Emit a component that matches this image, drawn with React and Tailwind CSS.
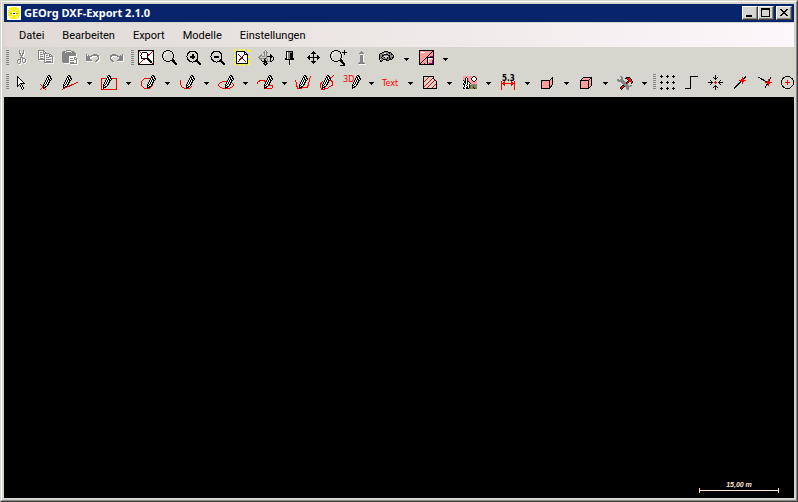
import { useState } from "react";

const PALETTE = {
  "#": "#000000",
  g: "#848484",
  w: "#ffffff",
  r: "#ff0000",
  y: "#ffff00",
  p: "#ff9c9c",
  o: "#848400",
  c: "#d6d6ce",
};

// Draws a small bitmap, one character per pixel ("." is transparent)
function Bitmap({ x = 0, y = 0, rows, tint }) {
  return rows.flatMap((row, j) =>
    [...row].map((ch, i) =>
      ch === "." ? null : (
        <rect key={`${i}-${j}`} x={x + i} y={y + j} width="1" height="1" fill={tint || PALETTE[ch]} />
      )
    )
  );
}

// Disabled icons are grey with a white shadow one pixel down and right
function Disabled({ x, y, rows }) {
  return (
    <>
      <Bitmap x={x + 1} y={y + 1} rows={rows} tint="#ffffff" />
      <Bitmap x={x} y={y} rows={rows} />
    </>
  );
}

const PENCIL = [
  "......##..",
  ".....#w##.",
  ".....##w#.",
  "....#w#w##",
  "....#w##w#",
  "...#w#w##.",
  "...#w#w#..",
  "..#w#w##..",
  "..#w#w#...",
  ".#w#w##...",
  ".##ww#....",
  ".#w##.....",
  ".###......",
  ".#........",
];

function Pencil({ x, y = 4 }) {
  return <Bitmap x={x} y={y} rows={PENCIL} />;
}

function Red({ d }) {
  return <path d={d} stroke="#ff0000" fill="none" />;
}

function Black({ d, w = 1, fill = "none" }) {
  return <path d={d} stroke="#000" strokeWidth={w} fill={fill} />;
}

const LENS = [
  "....####.......",
  "..##....##.....",
  ".#..ww....#....",
  ".#.w......#....",
  "#.w........#...",
  "#.w........#...",
  "#..........#...",
  "#..........#...",
  ".#........#....",
  ".#........##...",
  "..##....#####..",
  "....####..###..",
  "...........###.",
  "............###",
  ".............##",
];

const icons = {
  cut: (
    <Disabled
      x={8}
      y={3}
      rows={[
        "..g...g..",
        "..g...g..",
        "..g...g..",
        "..gg.gg..",
        "...g.g...",
        "...ggg...",
        "....g....",
        "...ggg...",
        "...g.ggg.",
        ".ggg.g..g",
        "g..g.g..g",
        "g..g.g..g",
        "g..g..gg.",
        ".gg......",
      ]}
    />
  ),
  copy: (
    <Disabled
      x={5}
      y={3}
      rows={[
        "gggggg.........",
        "g....gg........",
        "g.gg.g.g.......",
        "g....gggggg....",
        "g.ggg.g....gg..",
        "g.....g.gg.g.g.",
        "g.ggg.g....gggg",
        "g.....g.ggg...g",
        "g.ggg.g.......g",
        "ggggggg.ggggg.g",
        "......g.......g",
        "......g.ggggg.g",
        "......ggggggggg",
      ]}
    />
  ),
  paste: (
    <Disabled
      x={5}
      y={3}
      rows={[
        "....ggggg......",
        ".ggg.....ggg...",
        "ggg.ggggg.ggg..",
        "gggggggggggggg.",
        "gggggggggggggg.",
        "gggggggggggggg.",
        "ggggggg........",
        "ggggggg.wwwwgg.",
        "ggggggg.gggwgwg",
        "ggggggg.wwwwggg",
        "ggggggg.ggggwwg",
        "ggggggg.wwwwwwg",
        ".gggggg.ggggwwg",
        "........ggggggg",
      ]}
    />
  ),
  undo: (
    <Disabled
      x={5}
      y={7}
      rows={[
        "g......gggg..",
        "g.g..gggggggg",
        "gggggg.....gg",
        "gggg........g",
        "gggg........g",
        "ggggg......gg",
        "gggggg....gg.",
        ".........gg..",
      ]}
    />
  ),
  redo: (
    <Disabled
      x={5}
      y={7}
      rows={[
        "..gggg......g",
        "gggggggg..g.g",
        "gg.....gggggg",
        "g........gggg",
        "g........gggg",
        "gg......ggggg",
        ".gg....gggggg",
        "..gg.........",
      ]}
    />
  ),
  zoomAll: (
    <>
      <rect x="4.5" y="3.5" width="15" height="14" fill="#fff" stroke="#000" />
      <path d="M5 4L19 17M19 4L5 17" stroke="#c60000" />
      <circle cx="10.5" cy="8.5" r="3.5" fill="#fff" stroke="#000" />
      <Black d="M13 11L18 16" w={2} />
    </>
  ),
  zoom: <Bitmap x={4} y={3} rows={LENS} />,
  zoomIn: (
    <>
      <circle cx="10.5" cy="9.5" r="5.5" fill="none" stroke="#000" />
      <Black d="M8 9.5H13M10.5 7V12" w={2} />
      <Black d="M14 13L19 18" w={2} />
    </>
  ),
  zoomOut: (
    <>
      <circle cx="10.5" cy="9.5" r="5.5" fill="none" stroke="#000" />
      <Black d="M8 9.5H13" w={2} />
      <Black d="M14 13L19 18" w={2} />
    </>
  ),
  redraw: (
    <>
      <path
        d="M4 3L6 5M20 3L18 5M4 18L6 16M20 18L18 16M9.5 2V4M13.5 2V4M9.5 17V19M13.5 17V19M4 8.5H6M4 12.5H6M18 9.5H20M18 13.5H20"
        stroke="#ffff00"
        strokeWidth="2"
      />
      <path d="M6.5 4.5H14.5L17.5 7.5V16.5H6.5Z" fill="#fff" stroke="#000" />
      <Black d="M14.5 4.5V7.5H17.5" />
      <path d="M8 7L16 15M15 7L8 15" stroke="#840000" />
    </>
  ),
  rotate: (
    <Bitmap
      x={4}
      y={3}
      rows={[
        ".......g........",
        "......gcg.......",
        ".....ggcgg......",
        "......gcg.......",
        "...g..gcg...#...",
        "..gg..gcg...##..",
        ".ggcgggcg######.",
        "ggccccccg...##.#",
        ".gggggg#g...#..#",
        "..gg..#gcg..#..#",
        "...#..##cg..#.#.",
        "....#####ggg##..",
        "......###.......",
        ".....##.##......",
        "......###.......",
        ".......#........",
      ]}
    />
  ),
  pin: (
    <Bitmap
      x={7}
      y={4}
      rows={[
        ".#######.",
        ".#wgggg#.",
        ".#wgg###.",
        ".#wgg###.",
        ".#wgg###.",
        ".#wgg###.",
        ".#wgg###.",
        "##wgg####",
        "#########",
        "....#w...",
        "....#w...",
        "....#w...",
        "....#....",
        "....#....",
      ]}
    />
  ),
  pan: (
    <Bitmap
      x={5}
      y={4}
      rows={[
        "......#......",
        ".....###.....",
        "....#####....",
        "......#......",
        "..#...#...#..",
        ".##...#...##.",
        "#############",
        ".##...#...##.",
        "..#...#...#..",
        "......#......",
        "....#####....",
        ".....###.....",
        "......#......",
      ]}
    />
  ),
  zoomDynamic: (
    <>
      <Bitmap x={4} y={3} rows={LENS} />
      <Black d="M16 5.5H21M18.5 3V8M14 18.5H19" />
    </>
  ),
  info: (
    <Disabled
      x={8}
      y={4}
      rows={["...g...", "..ggg..", ".ggggg.", ".......", "..ggg..", "..ggg..", "..ggg..", "..ggg..", "..ggg..", "..ggg..", "..ggg..", ".ggggg.", "ggggggg"]}
    />
  ),
  view3d: (
    <Bitmap
      x={5}
      y={4}
      rows={[
        ".....####......",
        "...##gggg###...",
        ".##ggwwggg#g#..",
        "#gggg####ggg##.",
        "#gg##gggg##ggg#",
        "#gg#gw..wg#ggg#",
        "#g#gg#..#g#gg##",
        "#gg#gggg#g##g#.",
        "#wgg####gg###..",
        ".#g#...###.....",
        ".##............",
      ]}
    />
  ),
  model: (
    <>
      <rect x="6.5" y="3.5" width="14" height="14" fill="#ff9c9c" stroke="#000" />
      <path d="M8 5.5H12M15 11.5H19M15.5 11V15" stroke="#fff" />
      <path d="M16 16.5H20M19.5 13V17M11.5 16V17M17 9.5H20" stroke="#840084" />
      <Black d="M7 17L20 4M14.5 17V10.5H20" />
    </>
  ),
  pointer: (
    <Bitmap
      x={8}
      y={5}
      rows={[
        "#.......",
        "##......",
        "#w#.....",
        "#ww#....",
        "#www#...",
        "#wwww#..",
        "#wwwww#.",
        "#ww#####",
        "#w#w#...",
        "##.#w#..",
        "#..#w#..",
        "....#w#.",
        "....#w#.",
        ".....#..",
      ]}
    />
  ),
  point: (
    <>
      <Red d="M7 13L13 19M13 13L7 19" />
      <Pencil x={9} />
    </>
  ),
  line: (
    <>
      <Pencil x={5} />
      <Red d="M5 18.5L21 11" />
    </>
  ),
  rect: (
    <>
      <Red d="M5.5 7.5H20.5V18.5H5.5Z" />
      <Pencil x={6} />
    </>
  ),
  circle: (
    <>
      <circle cx="12" cy="12.5" r="5.5" fill="none" stroke="#f00" />
      <Pencil x={11} />
    </>
  ),
  arc: (
    <>
      <Red d="M6.5 9V13L8.5 16.5L12 17.5H15L18 15.5" />
      <Pencil x={11} />
    </>
  ),
  ellipse: (
    <>
      <ellipse cx="13" cy="14" rx="7.5" ry="3.5" fill="none" stroke="#f00" />
      <Pencil x={11} />
    </>
  ),
  spline: (
    <>
      <Red d="M5.5 13V11.5L8 9.5H12L17 14.5L20.5 15V17L15 17.5L12 16.5" />
      <Pencil x={11} />
    </>
  ),
  polyline: (
    <>
      <Red d="M4.5 9L6.5 17.5L16.5 16.5L19.5 5" />
      <Pencil x={7} />
    </>
  ),
  freehand: (
    <>
      <Red d="M8 10L5.5 13V16.5L7 18.5L12 17.5L17.5 14V11L15.5 9V7L19 4.5" />
      <Pencil x={6} />
    </>
  ),
  draw3d: (
    <>
      <text x="4" y="11" fontSize="9" fill="#f00" fontFamily="DejaVu Sans Condensed, sans-serif">3D</text>
      <Pencil x={12} />
    </>
  ),
  text: (
    <text x="4" y="15" fontSize="9" fill="#f00" fontFamily="DejaVu Sans Condensed, sans-serif">Text</text>
  ),
  hatch: (
    <>
      <path d="M6.5 5.5H16.5V7.5L19.5 10.5V17.5H6.5Z" stroke="#000" />
      <Red d="M7 11L12 6M7 16L16 7M10 17L18 9M15 17L19 13" />
    </>
  ),
  image: (
    <Bitmap
      x={7}
      y={5}
      rows={[
        "pppppppppp##pp",
        "ppp#ppppp#ww#p",
        "pp#w#ppp#wwww#",
        "pp#w#ppp#wwww#",
        "#p#w#pppp#ww#p",
        "w##w##pppp##pp",
        "w##w#w#ppppppp",
        "#w#w#ww#pppppp",
        "##ww#w#wgggggg",
        "w#w#ww#oggoggg",
        "w#ww#w#ogogogg",
        "#ww##w#ogg#ogg",
        "##w###oogoo#oo",
      ]}
    />
  ),
  dimension: (
    <>
      <text x="7" y="10" fontSize="8" fontWeight="bold" fill="#000" fontFamily="DejaVu Sans Condensed, sans-serif">5.3</text>
      <Red d="M6.5 10V19M19.5 10V19M7 12.5H19" />
      <Red d="M8.5 11V14M9.5 10V15M17.5 11V14M16.5 10V15" />
    </>
  ),
  face: (
    <>
      <rect x="7.5" y="9.5" width="8" height="8" fill="#ff9c9c" stroke="#000" />
      <path d="M15.5 9.5L18.5 6.5V13.5L15.5 17.5Z" fill="#ff9c9c" stroke="#000" />
    </>
  ),
  cube: (
    <>
      <path d="M7.5 9.5L10.5 6.5H18.5V14.5L15.5 17.5H7.5Z" fill="#ff9c9c" stroke="#000" />
      <Black d="M7.5 9.5H15.5V17.5M15.5 9.5L18.5 6.5" />
    </>
  ),
  tools: (
    <Bitmap
      x={5}
      y={5}
      rows={[
        "...gg...........",
        "....gg...####...",
        "....gg..##rrr#..",
        "gg.ggg....#rrr#.",
        "ggggggg....#rr#.",
        ".ggggggg..#rrrr#",
        "....ggggg#r#..r#",
        ".....gggg#r...#.",
        "......ggggg.....",
        ".....##ggggg.gg.",
        "....#rr#gggggg..",
        "...#rr#..ggg....",
        "...#r#...ggg....",
        "....#.....gg....",
      ]}
    />
  ),
  grid: (
    <Black d="M4 5.5H7M5.5 4V7M10 5.5H13M11.5 4V7M16 5.5H19M17.5 4V7M4 11.5H7M5.5 10V13M10 11.5H13M11.5 10V13M16 11.5H19M17.5 10V13M4 17.5H7M5.5 16V19M10 17.5H13M11.5 16V19M16 17.5H19M17.5 16V19" />
  ),
  ortho: <Black d="M5 17.5H10.5V5.5H18" />,
  center: (
    <Bitmap
      x={4}
      y={4}
      rows={[
        ".......#.......",
        ".......#.......",
        ".....#.#.#.....",
        "......###......",
        ".......#.......",
        "..#.........#..",
        "...#...r...#...",
        "#####.rrr.#####",
        "...#...r...#...",
        "..#.........#..",
        ".......#.......",
        "......###......",
        ".....#.#.#.....",
        ".......#.......",
        ".......#.......",
      ]}
    />
  ),
  snap: (
    <>
      <Black d="M6 17.5L18 5.5" />
      <Red d="M11 9.5H18M14.5 6V13" />
      <rect x="13" y="8" width="3" height="3" fill="#f00" />
    </>
  ),
  intersect: (
    <>
      <Black d="M6 6L15 11L19 12M13 17L16 12L19 6" />
      <Red d="M13 11.5H20M16.5 8V15" />
      <rect x="15" y="10" width="3" height="3" fill="#f00" />
    </>
  ),
  snapCircle: (
    <>
      <circle cx="11.5" cy="11.5" r="6" fill="none" stroke="#000" />
      <Red d="M9 11.5H14M11.5 9V14" />
    </>
  ),
};

function ToolButton({ icon, label, active, onClick }) {
  return (
    <button
      type="button"
      title={label}
      aria-label={label}
      aria-pressed={active}
      onClick={onClick}
      className="h-6 w-6 shrink-0"
    >
      <svg width="24" height="24" viewBox="0 0 24 24" fill="none" shapeRendering="crispEdges">
        {icons[icon]}
      </svg>
    </button>
  );
}

function MenuArrow({ label }) {
  return (
    <button type="button" aria-label={label} className="flex h-6 w-[15px] shrink-0 items-center justify-end pr-1">
      <svg width="5" height="3" viewBox="0 0 5 3" shapeRendering="crispEdges">
        <Bitmap rows={["#####", ".###.", "..#.."]} />
      </svg>
    </button>
  );
}

function Grip() {
  return (
    <span className="flex h-6 w-[5px] shrink-0 justify-end pt-[3px]">
      <svg width="3" height="16" viewBox="0 0 3 16" shapeRendering="crispEdges">
        <path d="M1.5 0V16" stroke="#848484" strokeWidth="3" strokeDasharray="1 1" />
      </svg>
    </span>
  );
}

const menus = ["Datei", "Bearbeiten", "Export", "Modelle", "Einstellungen"];

// [icon, label, has drop-down]
const editTools = [
  ["cut", "Ausschneiden"],
  ["copy", "Kopieren"],
  ["paste", "Einfügen"],
  ["undo", "Rückgängig"],
  ["redo", "Wiederholen"],
];

const viewTools = [
  ["zoomAll", "Alles zeigen"],
  ["zoom", "Zoom"],
  ["zoomIn", "Vergrößern"],
  ["zoomOut", "Verkleinern"],
  ["redraw", "Neu zeichnen"],
  ["rotate", "Drehen"],
  ["pin", "Fixieren"],
  ["pan", "Verschieben"],
  ["zoomDynamic", "Dynamischer Zoom"],
  ["info", "Info"],
  ["view3d", "Ansicht", true],
  ["model", "Darstellung", true],
];

const drawTools = [
  ["pointer", "Auswahl"],
  ["point", "Punkt"],
  ["line", "Linie", true],
  ["rect", "Rechteck", true],
  ["circle", "Kreis", true],
  ["arc", "Bogen", true],
  ["ellipse", "Ellipse", true],
  ["spline", "Spline", true],
  ["polyline", "Polylinie"],
  ["freehand", "Freihand"],
  ["draw3d", "3D", true],
  ["text", "Text", true],
  ["hatch", "Schraffur", true],
  ["image", "Bild", true],
  ["dimension", "Bemaßung", true],
  ["face", "Fläche", true],
  ["cube", "Körper", true],
  ["tools", "Werkzeuge", true],
];

const snapTools = [
  ["grid", "Raster"],
  ["ortho", "Ortho"],
  ["center", "Zentrum"],
  ["snap", "Punktfang"],
  ["intersect", "Schnittpunkt"],
  ["snapCircle", "Kreisfang"],
];

function ToolGroup({ tools, tool, setTool }) {
  return (
    <div className="flex shrink-0">
      <Grip />
      {tools.map(([icon, label, hasMenu]) => (
        <div key={icon} className="flex shrink-0">
          <ToolButton icon={icon} label={label} active={tool === icon} onClick={() => setTool(icon)} />
          {hasMenu && <MenuArrow label={`${label} Optionen`} />}
        </div>
      ))}
    </div>
  );
}

function WindowButton({ label, children }) {
  return (
    <button
      type="button"
      aria-label={label}
      className="h-[14px] w-4 border border-t-white border-l-white border-r-[#424142] border-b-[#424142] bg-[#d6d6ce]"
    >
      <svg width="14" height="12" viewBox="0 0 14 12" fill="none" shapeRendering="crispEdges">
        <path d="M0 11.5H13.5V0" stroke="#848484" />
        {children}
      </svg>
    </button>
  );
}

function TitleBar() {
  return (
    <header className="flex h-[18px] items-center bg-[#08246b] pr-[2px] pl-[3px]">
      <svg width="14" height="14" viewBox="0 0 14 14" shapeRendering="crispEdges">
        <rect width="14" height="14" fill="#fff" />
        <circle cx="7" cy="7" r="6.5" fill="#f7ef18" />
        <path d="M3 4.5H5M9 4.5H11M3 10.5H5M9 10.5H11" stroke="#fff79c" />
        <path d="M5 6.5H9M5 8.5H9" stroke="#fff" />
        <rect x="6" y="7" width="2" height="1" fill="#08246b" />
        <path d="M3 7.5H5M9 7.5H11" stroke="#a5a500" />
      </svg>
      <h1 className="flex-1 truncate pl-[3px] font-['Noto_Sans',sans-serif] text-[11px] leading-4 font-bold text-white">
        GEOrg DXF-Export 2.1.0
      </h1>
      <div className="flex">
        <WindowButton label="Minimieren">
          <path d="M3 9H9" stroke="#000" strokeWidth="2" />
        </WindowButton>
        <WindowButton label="Maximieren">
          <path d="M2.5 1V9.5H10.5V1" stroke="#000" />
          <path d="M2 2H11" stroke="#000" strokeWidth="2" />
        </WindowButton>
        <div className="ml-[2px] flex">
          <WindowButton label="Schließen">
            <Bitmap x={3} y={2} rows={["##....##", ".##..##.", "..####..", "...##...", "..####..", ".##..##.", "##....##"]} />
          </WindowButton>
        </div>
      </div>
    </header>
  );
}

function App() {
  const [tool, setTool] = useState("pointer");

  return (
    <div className="flex min-h-screen flex-col border border-t-[#d6d6ce] border-r-[#424142] border-b-[#424142] border-l-[#d6d6ce] font-['Roboto',sans-serif]">
      <div className="flex flex-1 flex-col border border-t-white border-r-[#848484] border-b-[#848484] border-l-white bg-[#d6d6ce] p-[2px]">
        <TitleBar />

        <nav className="mt-px flex h-6 items-center bg-linear-to-r from-[#e0d9d5] to-[#fcf7fa] pt-[2px] pl-[6px]">
          {menus.map((menu) => (
            <button key={menu} type="button" className="px-[9px] text-[11px] leading-4 text-black">
              {menu}
            </button>
          ))}
        </nav>

        <div className="flex overflow-hidden">
          <ToolGroup tools={editTools} tool={tool} setTool={setTool} />
          <ToolGroup tools={viewTools} tool={tool} setTool={setTool} />
        </div>
        <div className="flex overflow-hidden pb-[2px]">
          <div className="flex w-0 flex-1">
            <ToolGroup tools={drawTools} tool={tool} setTool={setTool} />
            <ToolGroup tools={snapTools} tool={tool} setTool={setTool} />
          </div>
        </div>

        <main className="flex flex-1 items-end justify-end bg-black pr-[15px] pb-[5px]">
          <div className="flex w-20 flex-col items-center">
            <span className="font-['Liberation_Sans',sans-serif] text-[7px] leading-[7px] font-bold text-[#ffe7d6] italic">
              15,00 m
            </span>
            <div className="flex h-[5px] w-full items-center border-x border-[#ffe7d6]">
              <div className="h-px w-full bg-[#ffe7d6]" />
            </div>
          </div>
        </main>
      </div>
    </div>
  );
}

export default App;
